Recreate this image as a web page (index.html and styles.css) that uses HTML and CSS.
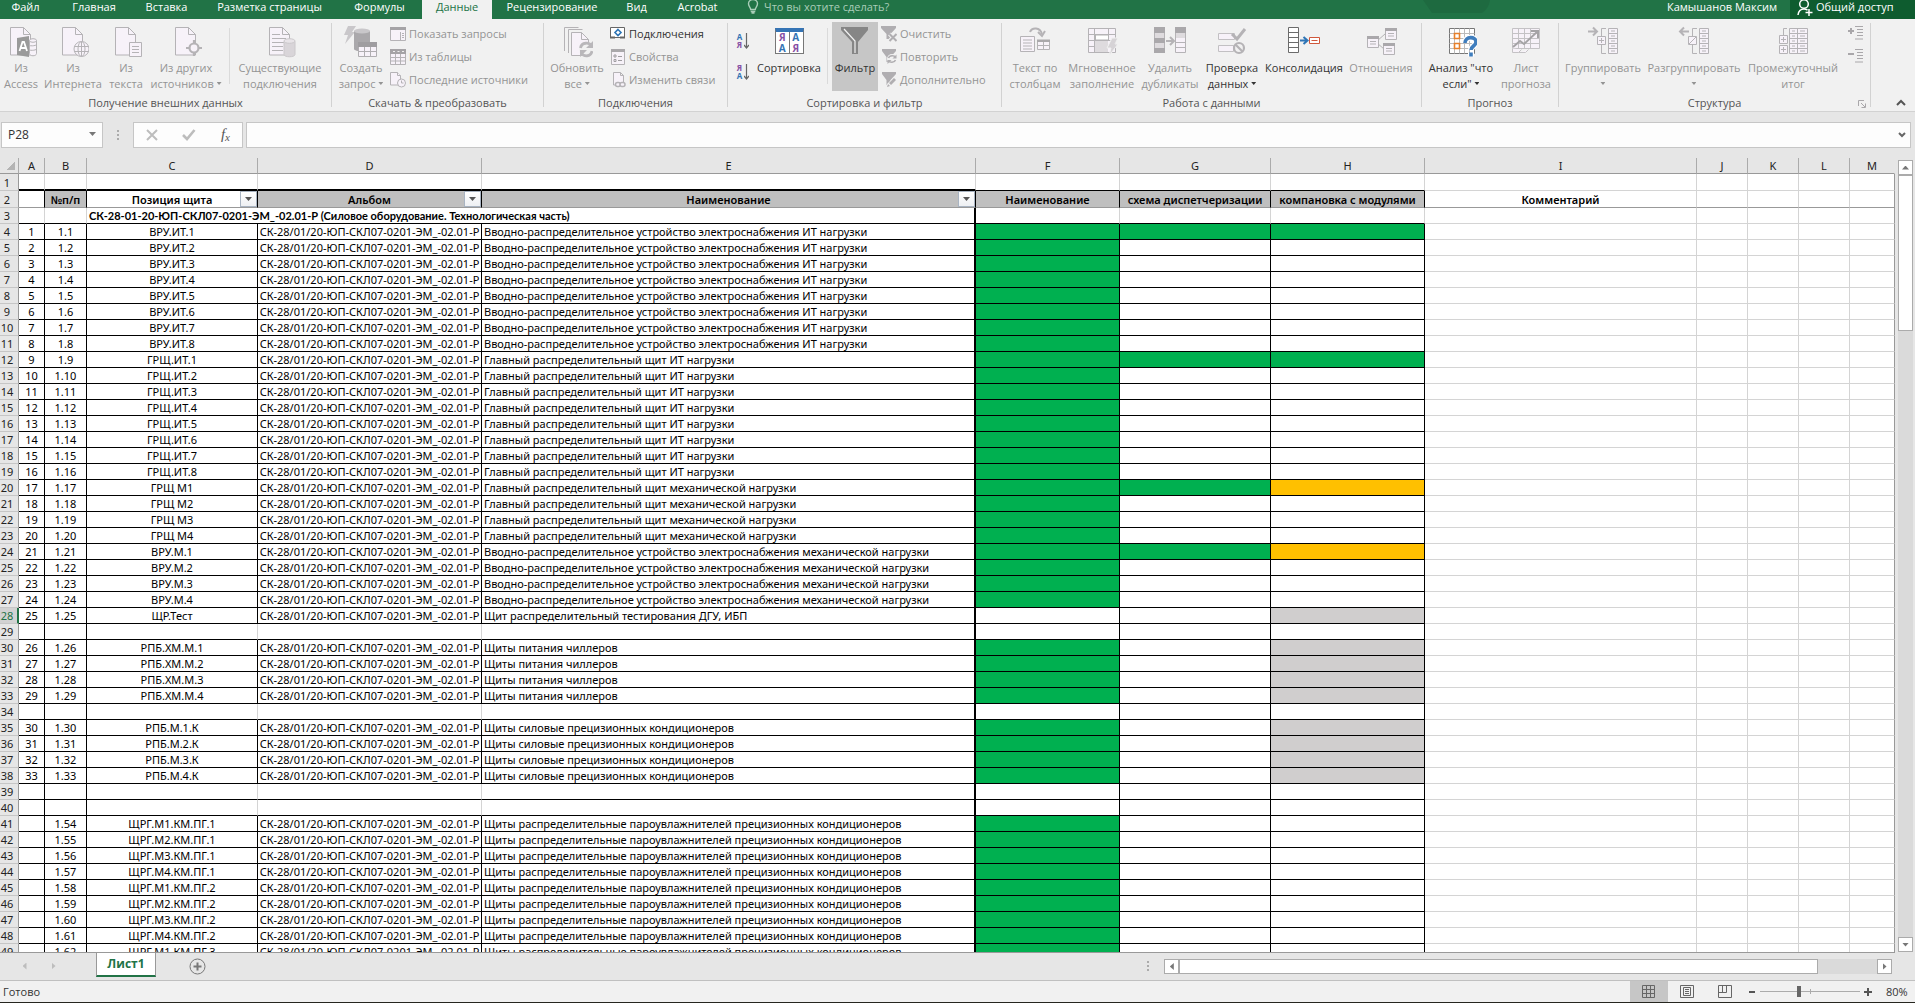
FILE: index.html
```html
<!DOCTYPE html>
<html lang="ru">
<head>
<meta charset="utf-8">
<title>Лист1</title>
<link rel="stylesheet" href="styles.css">
</head>
<body>
<header class="tabs">
  <nav class="tab-list">
    <button class="tab tab-file">Файл</button>
    <button class="tab">Главная</button>
    <button class="tab">Вставка</button>
    <button class="tab">Разметка страницы</button>
    <button class="tab">Формулы</button>
    <button class="tab active">Данные</button>
    <button class="tab">Рецензирование</button>
    <button class="tab">Вид</button>
    <button class="tab">Acrobat</button>
  </nav>
  <button class="tell-me">
    <svg width="12" height="16" viewBox="0 0 12 16" fill="none" stroke="#a9cdb8" stroke-width="1.4"><path d="M3.7 9.5C3.7 7.500 1.500 6.500 1.500 3.800 1.500 1.500 3.500-.5 6-.5s4.500 2 4.500 4.300c0 2.700-2.200 3.700-2.200 5.700zM3.700 11.500h4.600M4.500 13h3"/></svg>
    Что вы хотите сделать?
  </button>
  <svg class="deco" width="67" height="13" viewBox="0 0 67 13"><path d="M0 0h67c-1 6-3 9-8 13H9z" fill="#1e6a40"/></svg>
  <span class="user">Камышанов Максим</span>
  <button class="share">
    <svg width="16" height="17" viewBox="0 0 16 17" fill="none" stroke="#fff" stroke-width="1.500"><circle cx="7" cy="4" r="4.300"/><path d="M1 15c.5-4 2.500-6 6-6 1.500 0 2.500.5 3.500 1M12 9v7M8.500 12.500h7"/></svg>
    Общий доступ
  </button>
</header>

<section class="ribbon">
  <div class="group">
    <div class="tools">
      <button class="big w42" disabled>
        <svg width="32" height="32" viewBox="0 0 32 32" fill="#f7f2f9" stroke="#b5b3b6"><path d="M5.500 1.500h13l7 7v20.500h-20z"/><path d="M18.500 1.500v7h7" fill="none"/><path d="M24.500 14.500v13c0 3 7 3 7 0v-13" /><ellipse cx="28" cy="14.500" rx="3.500" ry="1.800"/><path d="M22 18.500c2 2 9 1.500 9.500 0M22 23c2 2 9 1.500 9.500 0" fill="none"/><path d="M12 12l12-2v21l-12-2z" fill="#9a9a9a" stroke="none"/><path d="M14.500 25l3-9h1.500l3 9M15.500 22h5.500" fill="none" stroke="#fff" stroke-width="1.800"/></svg>
        <span>Из<br>Access</span></button>
      <button class="big w62" disabled>
        <svg width="32" height="32" viewBox="0 0 32 32" fill="#f7f2f9" stroke="#b5b3b6"><path d="M5.500 1.500h13l7 7v20.500h-20z"/><path d="M18.500 1.500v7h7" fill="none"/><circle cx="24.500" cy="23" r="7.500"/><ellipse cx="24.500" cy="23" rx="3.500" ry="7.500"/><path d="M17.500 20.500h14M17.500 25.500h14M24.500 15.500v15" fill="none"/></svg>
        <span>Из<br>Интернета</span></button>
      <button class="big w44" disabled>
        <svg width="32" height="32" viewBox="0 0 32 32" fill="#f7f2f9" stroke="#b5b3b6"><path d="M5.500 1.500h13l7 7v20.500h-20z"/><path d="M18.500 1.500v7h7" fill="none"/><path d="M19.500 16.500h12v14h-12zM22 20.500h7M22 23.500h7M22 26.500h7"/></svg>
        <span>Из<br>текста</span></button>
      <button class="big w76" disabled>
        <svg width="32" height="32" viewBox="0 0 32 32" fill="#f7f2f9" stroke="#b5b3b6"><path d="M5.500 1.500h13l7 7v20.500h-20z"/><path d="M18.500 1.500v7h7" fill="none"/><circle cx="24" cy="22" r="4.500" stroke-width="2.200"/><path d="M24 14v4M24 26v4M16 22h4M28 22h4" stroke-width="2.200"/></svg>
        <span>Из других<br>источников <i class="caret"></i></span></button>
      <i class="rule"></i>
      <button class="big w100" disabled>
        <svg width="32" height="32" viewBox="0 0 32 32" fill="#f7f2f9" stroke="#b5b3b6"><path d="M5.500 1.500h13l7 7v20.500h-20z"/><path d="M18.500 1.500v7h7" fill="none"/><path d="M8 8.500h8M8 12.500h14M8 16.500h12M8 20.500h11M8 24.500h11"/><path d="M20 15.500v13c0 3 11 3 11 0v-13" fill="#d9d5d9" stroke="#cbc8cb"/><ellipse cx="25.500" cy="15" rx="5.500" ry="2.300" fill="#e8e4e8" stroke="#cbc8cb"/></svg>
        <span>Существующие<br>подключения</span></button>
    </div>
    <div class="caption">Получение внешних данных</div>
  </div>

  <div class="group">
    <div class="tools">
      <button class="big w58" disabled>
        <svg width="34" height="32" viewBox="0 0 34 32"><path d="M4 0h8l-4 6h3L1 18l3-9H0z" fill="#c9c7ca"/><path d="M10 5v18c0 3 16 3 16 0V5z" fill="#aaa8ab"/><ellipse cx="18" cy="5" rx="8" ry="2.600" fill="#c9c7ca"/><path d="M14.500 17.500h18v13h-18zM20.500 21v9.500M26.500 21v9.500M14.500 25.500h18" fill="#f7f2f9" stroke="#b0aeb1"/><path d="M14 16h19v5H14z" fill="#9f9da0"/></svg>
        <span>Создать<br>запрос <i class="caret"></i></span></button>
      <div class="stack">
        <button class="small" disabled><svg width="16" height="16" viewBox="0 0 16 16" fill="#f7f2f9" stroke="#b5b3b6"><path d="M.5 1.500h15v13H.5z"/><path d="M0 1h16v3H0z" fill="#a5a3a6" stroke="none"/><path d="M10.500 6v8M12 7.500h2M12 9.500h2M12 11.500h2"/></svg>Показать запросы</button>
        <button class="small" disabled><svg width="16" height="16" viewBox="0 0 16 16" fill="#f7f2f9" stroke="#b5b3b6"><path d="M.5 1.500h15v14H.5zM.5 8.500h15M.5 12h15M5.500 5v10M10.500 5v10"/><path d="M0 0h16v5H0z" fill="#a5a3a6" stroke="none"/><path d="M3 2.500h2M7.500 2.500h2M12 2.500h2" stroke="#eee"/></svg>Из таблицы</button>
        <button class="small" disabled><svg width="16" height="16" viewBox="0 0 16 16" fill="#f7f2f9" stroke="#b5b3b6"><path d="M.5 0.500h7l3 3v9.500h-10z"/><path d="M7.500.5v3h3"/><circle cx="11.500" cy="11" r="4"/><path d="M11.500 8.500v2.500h2"/></svg>Последние источники</button>
      </div>
    </div>
    <div class="caption">Скачать &amp; преобразовать</div>
  </div>

  <div class="group">
    <div class="tools">
      <button class="big w66" disabled>
        <svg width="32" height="32" viewBox="0 0 32 32" fill="#f7f2f9" stroke="#b5b3b6"><path d="M3.500 25V1.500h14M7.500 27V3.500h14" fill="none"/><path d="M10.500 6.500h10l7 7v16h-17z"/><path d="M20.500 6.500v7h7" fill="none"/><circle cx="25.500" cy="23.500" r="7.500" fill="#f1f1f1" stroke="none"/><path d="M19.500 22c1-6 9-6 11-2M31 25c-1 6-8 6-11 2" fill="none" stroke="#b9b7ba" stroke-width="2.800"/><path d="M32 15v7h-7zM19 31v-7h7z" fill="#b9b7ba" stroke="none"/></svg>
        <span>Обновить<br>все <i class="caret"></i></span></button>
      <div class="stack">
        <button class="small"><svg width="16" height="16" viewBox="0 0 16 16" fill="#fff" stroke="#666"><path d="M.5 1.500h14v10H.5z"/><path d="M0 11.500h5M10 11.500h5" stroke-width="2"/><path d="M8 3.500l3 3-3 3-3-3z" stroke="#2e75b6" stroke-width="1.600"/></svg>Подключения</button>
        <button class="small" disabled><svg width="16" height="16" viewBox="0 0 16 16" fill="#f7f2f9" stroke="#b5b3b6"><path d="M1.500.5h13v15h-13z"/><path d="M1 0h14v3H1z" fill="#aaa8ab" stroke="none"/><path d="M4 6h2v2H4zM4 10.500h2v2H4zM8 7.500h4M8 11.500h4" stroke="#9f9da0"/></svg>Свойства</button>
        <button class="small" disabled><svg width="16" height="16" viewBox="0 0 16 16" fill="#f7f2f9" stroke="#b5b3b6"><path d="M3.500 13V.5h7l3 3V10M10.500.5v3h3M3.500 13h2"/><rect x="5.500" y="10.500" width="5" height="4" rx="2" stroke-width="1.500"/><rect x="10" y="10.500" width="5" height="4" rx="2" stroke-width="1.500"/></svg>Изменить связи</button>
      </div>
    </div>
    <div class="caption">Подключения</div>
  </div>

  <div class="group">
    <div class="tools">
      <div class="sorts">
        <button class="icon-btn" aria-label="Сортировка от А до Я"><span class="az"><b class="blue">А</b><b class="violet">Я</b></span><svg width="5" height="16" viewBox="0 0 5 16" fill="none" stroke="#666"><path d="M2.500 0v15M0 12l2.500 3L5 12" stroke-width="1.200"/></svg></button>
        <button class="icon-btn" aria-label="Сортировка от Я до А"><span class="az"><b class="violet">Я</b><b class="blue">А</b></span><svg width="5" height="16" viewBox="0 0 5 16" fill="none" stroke="#666"><path d="M2.500 0v15M0 12l2.500 3L5 12" stroke-width="1.200"/></svg></button>
      </div>
      <button class="big w66">
        <span class="sort-pic"><b class="violet">Я</b><b class="blue">А</b><b class="blue">А</b><b class="violet">Я</b></span>
        <span>Сортировка</span></button>
      <i class="rule"></i>
      <button class="big w46 pressed">
        <svg width="32" height="32" viewBox="0 0 32 32"><path d="M2 1h27v3L19 16v12h-6V16L2 4z" fill="#868686"/><path d="M5 3l11 12v12" fill="none" stroke="#f2f2f2" stroke-width="1.200"/></svg>
        <span>Фильтр</span></button>
      <div class="stack after-pressed">
        <button class="small" disabled><svg width="16" height="16" viewBox="0 0 16 16"><path d="M0 0h15v2L9.500 8v5h-4V8L0 2z" fill="#b0aeb1"/><path d="M8.500 8l7 7M15.500 8l-7 7" stroke="#f1f1f1" stroke-width="4"/><path d="M8.500 8l7 7M15.500 8l-7 7" stroke="#b0aeb1" stroke-width="2"/></svg>Очистить</button>
        <button class="small" disabled><svg width="16" height="16" viewBox="0 0 16 16"><path d="M1 0h14v2L9.500 8v5h-4V8L1 2z" fill="#b0aeb1"/><circle cx="11" cy="10" r="5" fill="#f1f1f1"/><path d="M7.500 9c1-3 6-3 7-.5M14.500 11c-1 3-6 3-7 .5" fill="none" stroke="#b0aeb1" stroke-width="1.500"/><path d="M15.500 5.500v4h-4zM6.500 15v-4h4z" fill="#b0aeb1"/></svg>Повторить</button>
        <button class="small" disabled><svg width="16" height="16" viewBox="0 0 16 16"><path d="M1 0h14v2L9.500 8v5h-4V8L1 2z" fill="#b0aeb1"/><path d="M5 15l1-3 7-7 3 3-7 6z" fill="#f1f1f1"/><path d="M6 15l1-3 2 2zM8 11l5-5 2 2-5 5z" fill="#b0aeb1"/></svg>Дополнительно</button>
      </div>
    </div>
    <div class="caption">Сортировка и фильтр</div>
  </div>

  <div class="group">
    <div class="tools">
      <button class="big w66" disabled>
        <svg width="32" height="32" viewBox="0 0 32 32" fill="#f7f2f9" stroke="#b5b3b6"><path d="M1.500 10.500h14v15h-14zM4 14h9M4 17h9M4 20h9M4 23h9"/><path d="M18.500 14.500h12v9h-12zM18.500 19.500h12M24.500 16v7"/><path d="M18 13.500h13v2.500h-13z" fill="#aaa8ab" stroke="none"/><path d="M11 6c2-5 10-5 12 2" fill="none" stroke-width="2"/><path d="M19 6l4 4 3-5" fill="none" stroke-width="2"/></svg>
        <span>Текст по<br>столбцам</span></button>
      <button class="big w68" disabled>
        <svg width="32" height="32" viewBox="0 0 32 32" fill="#f7f2f9" stroke="#b5b3b6"><path d="M2.500 2.500h27v24h-27zM2.500 8.500h27M2.500 14.500h27M2.500 20.500h27M8.500 2.500v24M22.500 2.500v12"/><path d="M9.500 9h13v5h-13z" fill="#fff"/><path d="M9 15h13v11H9z" fill="#dedbde" stroke="none"/><path d="M26 12h6l-3 6h3l-9 12 2-8h-4z" fill="#d6d3d6" stroke="#f1f1f1"/></svg>
        <span>Мгновенное<br>заполнение</span></button>
      <button class="big w68" disabled>
        <svg width="32" height="32" viewBox="0 0 32 32" fill="#f7f2f9" stroke="#b5b3b6"><path d="M.5 1.500h10v25H.5zM21.500 1.500h10v25h-10zM21.500 11.500h10M21.500 16.500h10M21.500 21.500h10"/><path d="M0 1h11v6H0zM0 12h11v5H0zM0 22h11v5H0zM21 1h11v6H21z" fill="#aaa8ab" stroke="none"/><path d="M1 7h9v5H1zM1 17h9v5H1zM22 7h9v5h-9z" fill="#dedbde" stroke="none"/><path d="M12 15h7M16 11l4 4-4 4" fill="none" stroke-width="2"/></svg>
        <span>Удалить<br>дубликаты</span></button>
      <button class="big w56">
        <svg width="32" height="32" viewBox="0 0 32 32" fill="#f7f2f9" stroke="#c2c0c3"><path d="M2.500 7.500h16v6h-16zM2.500 19.500h15v6h-15z"/><path d="M16 8l5 5L29 3" fill="none" stroke="#b5b3b6" stroke-width="3"/><circle cx="23" cy="22" r="5" fill="#f1f1f1" stroke="#b5b3b6" stroke-width="2.200"/><path d="M19.500 18.500l7 7" stroke="#b5b3b6" stroke-width="2.200"/></svg>
        <span>Проверка<br>данных <i class="caret"></i></span></button>
      <button class="big w88">
        <svg width="32" height="32" viewBox="0 0 32 32" fill="#fff" stroke="#6b6b6b"><path d="M.5 1.500h10v25H.5zM.5 6.500h10M.5 11.500h10M.5 16.500h10M.5 21.500h10"/><path d="M21.500 11.500h10v6h-10zM23.500 14.500h6" stroke="#d0583c"/><path d="M12 14.500h6M15.500 11l4 3.500-4 3.500" fill="none" stroke="#2e75b6" stroke-width="2"/></svg>
        <span>Консолидация</span></button>
      <button class="big w66" disabled>
        <svg width="32" height="32" viewBox="0 0 32 32" fill="#f7f2f9" stroke="#b5b3b6"><path d="M12 15l8-7M12 17l7 6" fill="none"/><path d="M2.500 10.500h11v11h-11zM20.500 2.500h11v11h-11zM18.500 17.500h11v11h-11zM5 15.500h6M5 18h6M23 7.500h6M23 10h6M21 22.500h6M21 25h6"/><path d="M2 10h12v3H2zM20 2h12v3H20zM18 17h12v3H18z" fill="#aaa8ab" stroke="none"/></svg>
        <span>Отношения</span></button>
    </div>
    <div class="caption">Работа с данными</div>
  </div>

  <div class="group">
    <div class="tools">
      <button class="big w78">
        <svg width="32" height="32" viewBox="0 0 32 32" fill="#fff" stroke="#777"><path d="M4.500 2.500h25v25h-25z"/><path d="M4.500 7.500h25M4.500 12.500h25M4.500 17.500h25M4.500 22.500h25M9.500 2.500v25M14.500 2.500v25M19.500 2.500v25M24.500 2.500v25" stroke="#bbb"/><path d="M9.500 7.500h5v5h-5zM9.500 17.500h5v5h-5z" stroke="#e6802b" stroke-width="1.600"/><path d="M20 17c0-7 11-7 11-1 0 4-5 4-5 8M26 27v3.500" fill="none" stroke="#fff" stroke-width="6"/><path d="M20 17c0-7 11-7 11-1 0 4-5 4-5 8M26 26.500v4" fill="none" stroke="#3f7dbd" stroke-width="3.600"/></svg>
        <span>Анализ "что<br>если" <i class="caret"></i></span></button>
      <button class="big w52" disabled>
        <svg width="32" height="32" viewBox="0 0 32 32" fill="#f7f2f9" stroke="#c4c2c5"><path d="M2.500 2.500h27v20h-27zM2.500 7.500h27M2.500 12.500h27M2.500 17.500h27M8.500 2.500v20M14.500 2.500v20M20.500 2.500v20"/><path d="M2.500 22.500v4h6l3-3 M8.500 26.500h7l3-3"/><path d="M3 21l7-6 4 3L28 5M21 5h7v7" fill="none" stroke="#a5a3a6" stroke-width="2"/></svg>
        <span>Лист<br>прогноза</span></button>
    </div>
    <div class="caption">Прогноз</div>
  </div>

  <div class="group last">
    <div class="tools">
      <button class="big w88" disabled>
        <svg width="32" height="32" viewBox="0 0 32 32" fill="#f7f2f9" stroke="#b5b3b6"><path d="M21.500 2.500h9v25h-9zM21.500 7.500h9M21.500 12.500h9M21.500 17.500h9M21.500 22.500h9M24 5h4M24 10h4M24 15h4M24 20h4M24 25h4"/><path d="M19 2.500h-4.500v8M14.500 19v8.500H19" fill="none"/><path d="M10.500 10.500h8v8h-8zM12 14.500h5M14.500 12v5"/><path d="M1 5.500h8M6 1.500l4 4-4 4" fill="none" stroke-width="2"/></svg>
        <span>Группировать<br><i class="caret"></i></span></button>
      <button class="big w94" disabled>
        <svg width="32" height="32" viewBox="0 0 32 32" fill="#f7f2f9" stroke="#b5b3b6"><path d="M21.500 2.500h9v25h-9zM21.500 7.500h9M21.500 12.500h9M21.500 17.500h9M21.500 22.500h9M24 5h4M24 10h4M24 15h4M24 20h4M24 25h4"/><path d="M19 2.500h-4.500v8M14.500 19v8.500H19" fill="none"/><path d="M10.500 10.500h8v8h-8zM11 18l7-7"/><path d="M11 5.500H2M6 1.500l-4 4 4 4" fill="none" stroke-width="2"/></svg>
        <span>Разгруппировать<br><i class="caret"></i></span></button>
      <button class="big w104" disabled>
        <svg width="32" height="32" viewBox="0 0 32 32" fill="#f7f2f9" stroke="#b5b3b6"><path d="M12.500 2.500h18v25h-18zM12.500 7.500h18M12.500 12.500h18M12.500 17.500h18M12.500 22.500h18M20.500 2.500v25M15 5h3M15 10h3M15 15h3M15 20h3M15 25h3M23 5h5M23 10h5M23 15h5M23 20h5M23 25h5"/><path d="M10 2.500H6.500v8" fill="none"/><path d="M2.500 9.500h8v8h-8zM2.500 19.500h8v8h-8zM4 13.500h5M6.500 11v5M4 23.500h5M6.500 21v5"/></svg>
        <span>Промежуточный<br>итог</span></button>
      <div class="details">
        <button class="icon-btn" disabled aria-label="Отобразить детали"><svg width="16" height="14" viewBox="0 0 16 14" stroke="#a9a7aa" fill="none"><path d="M0 5h6M3 2v6" stroke-width="2"/><path d="M7 .5h8M9 3.500h6M9 6.500h6M9 9.500h6M7 13h8"/></svg></button>
        <button class="icon-btn" disabled aria-label="Скрыть детали"><svg width="16" height="14" viewBox="0 0 16 14" stroke="#a9a7aa" fill="none"><path d="M0 5h6" stroke-width="2"/><path d="M7 .5h8M9 3.500h6M9 6.500h6M9 9.500h6M7 13h8"/></svg></button>
      </div>
    </div>
    <div class="caption">Структура<svg class="launcher" width="8" height="8" viewBox="0 0 8 8" fill="none" stroke="#a9a7aa"><path d="M.5 6V.5H6M3 3l4 4M7.500 3.500v4h-4"/></svg></div>
  </div>
  <button class="collapse" aria-label="Свернуть ленту"><svg width="10" height="7" viewBox="0 0 10 7" fill="none" stroke="#555" stroke-width="2"><path d="M1 6l4-4 4 4"/></svg></button>
</section>

<section class="formula-bar">
  <div class="name-box"><input aria-label="Имя" value="P28"><button aria-label="Список имён"><i class="caret"></i></button></div>
  <i class="dots"></i>
  <div class="fx">
    <button aria-label="Отмена"><svg width="12" height="12" viewBox="0 0 12 12" stroke="#bdbdbd" stroke-width="2"><path d="M1 1l10 10M11 1L1 11"/></svg></button>
    <button aria-label="Ввод"><svg width="14" height="12" viewBox="0 0 14 12" fill="none" stroke="#bdbdbd" stroke-width="2.600"><path d="M1 6l4 4 7.500-9"/></svg></button>
    <button class="fx-label" aria-label="Вставить функцию"><i>f<sub>x</sub></i></button>
  </div>
  <div class="formula"><input aria-label="Строка формул"><button aria-label="Развернуть"><svg width="8" height="6" viewBox="0 0 8 6" fill="none" stroke="#666" stroke-width="2"><path d="M1 1l3 3 3-3"/></svg></button></div>
</section>

<main class="sheet">
  <div class="viewport">
    <table class="grid">
      <colgroup><col class="c-n"><col class="c-a"><col class="c-b"><col class="c-c"><col class="c-d"><col class="c-e"><col class="c-f"><col class="c-g"><col class="c-h"><col class="c-i"><col class="c-j"><col class="c-j"><col class="c-j"><col></colgroup>
      <thead><tr><th class="corner"></th><th>A</th><th>B</th><th>C</th><th>D</th><th>E</th><th>F</th><th>G</th><th>H</th><th>I</th><th>J</th><th>K</th><th>L</th><th>M</th></tr></thead>
      <tbody id="rows"></tbody>
    </table>
  </div>
  <div class="vscroll">
    <button class="sb-btn" aria-label="Вверх"><i class="tri up"></i></button>
    <div class="vtrack"><i class="vthumb"></i></div>
    <button class="sb-btn" aria-label="Вниз"><i class="tri down"></i></button>
  </div>
</main>

<footer>
  <div class="sheet-tabs">
    <button class="nav-btn" aria-label="Предыдущий лист"><i class="tri left"></i></button>
    <button class="nav-btn" aria-label="Следующий лист"><i class="tri right"></i></button>
    <button class="sheet-tab">Лист1</button>
    <button class="add" aria-label="Новый лист"><svg width="17" height="17" viewBox="0 0 17 17" fill="none" stroke="#777"><circle cx="8.500" cy="8.500" r="7.500"/><path d="M4.500 8.500h8M8.500 4.500v8" stroke-width="2"/></svg></button>
    <i class="dots"></i>
    <div class="hscroll">
      <button class="sb-btn" aria-label="Влево"><i class="tri left"></i></button>
      <div class="htrack"><i class="hthumb"></i></div>
      <button class="sb-btn" aria-label="Вправо"><i class="tri right"></i></button>
    </div>
  </div>
  <div class="status">
    <span class="ready">Готово</span>
    <button class="view on" aria-label="Обычный"><svg width="14" height="14" viewBox="0 0 14 14" fill="none" stroke="#666"><path d="M.5.5h12v12H.5zM4.500.5v12M8.500.5v12M.5 4.500h12M.5 8.500h12"/></svg></button>
    <button class="view" aria-label="Разметка страницы"><svg width="14" height="14" viewBox="0 0 14 14" fill="none" stroke="#666"><path d="M.5.5h13v12H.5zM3.500 2.500h7v8h-7zM5 4.500h4M5 6.500h4M5 8.500h4"/></svg></button>
    <button class="view" aria-label="Страничный режим"><svg width="14" height="14" viewBox="0 0 14 14" fill="none" stroke="#666"><path d="M.5.5h13v12H.5zM.5 7.500h8v-7M4.500.5v7"/></svg></button>
    <button class="zoom-btn zoom-out" aria-label="Уменьшить"><svg width="8" height="8" viewBox="0 0 8 8" stroke="#555" stroke-width="2"><path d="M1 4h6"/></svg></button>
    <input class="zoom" type="range" min="0" max="100" value="39" aria-label="Масштаб">
    <button class="zoom-btn" aria-label="Увеличить"><svg width="8" height="8" viewBox="0 0 8 8" stroke="#555" stroke-width="2"><path d="M0 4h8M4 0v8"/></svg></button>
    <span class="percent">80%</span>
  </div>
</footer>
<script src="app.js"></script>
</body>
</html>
```
FILE: app.js
```js
const ALBUM = 'СК-28/01/20-ЮП-СКЛ07-0201-ЭМ_-02.01-Р';
const KIND = {
  it: 'Вводно-распределительное устройство электроснабжения ИТ нагрузки',
  main: 'Главный распределительный щит ИТ нагрузки',
  mech: 'Главный распределительный щит механической нагрузки',
  input: 'Вводно-распределительное устройство электроснабжения механической нагрузки',
  test: 'Щит распределительный тестирования ДГУ, ИБП',
  chill: 'Щиты питания чиллеров',
  power: 'Щиты силовые прецизионных кондиционеров',
  steam: 'Щиты распределительные пароувлажнителей прецизионных кондиционеров'
};

// Fills of columns F, G, H: g = green, o = orange, s = silver, - = none
const rows = [];
let item = 1;
function add(position, kind, fills, numbered = true) {
  rows.push({ n: numbered ? item : '', p: '1.' + (numbered ? item : item + 20), position, kind, fills });
  item++;
}
for (let i = 1; i <= 8; i++) add('ВРУ.ИТ.' + i, 'it', i === 1 ? 'ggg' : 'g--');
for (let i = 1; i <= 8; i++) add('ГРЩ.ИТ.' + i, 'main', i === 1 ? 'ggg' : 'g--');
for (let i = 1; i <= 4; i++) add('ГРЩ М' + i, 'mech', i === 1 ? 'ggo' : 'g--');
for (let i = 1; i <= 4; i++) add('ВРУ.М.' + i, 'input', i === 1 ? 'ggo' : 'g--');
add('ЩР.Тест', 'test', '--s');
rows.push(null);
for (let i = 1; i <= 4; i++) add('РПБ.ХМ.М.' + i, 'chill', 'g-s');
rows.push(null);
for (let i = 1; i <= 4; i++) add('РПБ.М.' + i + '.К', 'power', 'g-s');
rows.push(null, null);
for (let i = 0; i < 9; i++) {
  add('ЩРГ.М' + (i % 4 + 1) + '.КМ.ПГ.' + (Math.floor(i / 4) + 1), 'steam', 'g--', false);
}

const FILL = { g: 'green', o: 'orange', s: 'silver', '-': '' };
const filter = '<button class="filter" aria-label="Фильтр"><i class="caret"></i></button>';
const tail = '<td></td>'.repeat(5);

let html = '<tr class="r1"><th>1</th>' + '<td class="top"></td>'.repeat(5) + '<td class="thin"></td>'.repeat(3) + tail + '</tr>';
html += '<tr class="r2"><th>2</th><td class="k"></td><td class="k head">№п/п</td>' +
  '<td class="k">Позиция щита' + filter + '</td><td class="k head">Альбом' + filter + '</td>' +
  '<td class="k head">Наименование' + filter + '</td><td class="k head">Наименование</td>' +
  '<td class="k head">схема диспетчеризации</td><td class="k head">компановка с модулями</td>' +
  '<td>Комментарий</td>' + '<td></td>'.repeat(4) + '</tr>';
html += '<tr><th>3</th><td class="under"></td><td class="under"></td>' +
  '<td class="under thick section" colspan="3">СК-28-01-20-ЮП-СКЛ07-0201-ЭМ_-02.01-Р (Силовое оборудование. Технологическая часть)</td>' +
  '<td class="under"></td><td class="under"></td><td class="under"></td>' + tail + '</tr>';

rows.forEach((r, i) => {
  const num = i + 4;
  const fills = r ? r.fills : '---';
  const inner = r ? 'under k' : 'under';
  html += `<tr><th${num === 28 ? ' class="current"' : ''}>${num}</th>` +
    `<td class="under k">${r ? r.n : ''}</td><td class="under k">${r ? r.p : ''}</td>` +
    `<td class="${inner}">${r ? r.position : ''}</td><td class="${inner}">${r ? ALBUM : ''}</td>` +
    `<td class="under thick name">${r ? KIND[r.kind] : ''}</td>` +
    [...fills].map(f => `<td class="under k ${FILL[f]}"></td>`).join('') + tail + '</tr>';
});
document.getElementById('rows').innerHTML = html;
```
FILE: styles.css
```css
* { box-sizing: border-box; }
body {
  margin: 0;
  height: 100vh;
  display: flex;
  flex-direction: column;
  overflow: hidden;
  background: #e6e6e6;
  color: #333;
  font: 11px/16px "Open Sans", "Noto Sans", sans-serif;
}
button, input {
  margin: 0;
  padding: 0;
  border: 0;
  background: none;
  color: inherit;
  font: inherit;
}
button { white-space: nowrap; }
svg { display: block; flex: none; }
i { display: inline-block; }

/* Tab strip */
.tabs {
  flex: none;
  display: flex;
  height: 19px;
  background: #217346;
  color: #fff;
  overflow: hidden;
}
.tab-list {
  display: grid;
  grid-template-columns: 57px 74px 71px 135px 85px 70px 120px 49px 73px;
}
.tab, .user, .share, .tell-me { line-height: 14px; padding-bottom: 5px; }
.tab-file { padding-right: 6px; }
.tab.active { background: #f1f1f1; color: #217346; }
.tell-me {
  display: flex;
  gap: 5px;
  margin-left: 13px;
  color: #a9cdb8;
}
.deco { margin-left: auto; }
.user { margin: 0 10px 0 174px; width: 116px; white-space: nowrap; text-align: center; }
.share {
  display: flex;
  gap: 3px;
  width: 125px;
  padding-left: 7px;
  background: #0e5c2f;
}

/* Ribbon */
.ribbon {
  flex: none;
  display: flex;
  height: 93px;
  background: #f1f1f1;
  border-bottom: 1px solid #d2d2d2;
}
.group {
  display: flex;
  flex-direction: column;
  padding-top: 3px;
  background: linear-gradient(#d2d2d2, #d2d2d2) right 4px / 1px 84px no-repeat;
  padding-right: 1px;
}
.group:nth-child(1) { width: 332px; }
.group:nth-child(2) { width: 212px; }
.group:nth-child(3) { width: 184px; }
.group:nth-child(4) { width: 274px; }
.group:nth-child(5) { width: 420px; }
.group:nth-child(6) { width: 137px; }
.group:nth-child(7) { width: 312px; }
.tools { display: flex; height: 73px; }
.caption {
  position: relative;
  text-align: center;
  color: #555;
}
.launcher { position: absolute; right: 4px; top: 5px; }
.big {
  flex: none;
  display: flex;
  flex-direction: column;
  align-items: center;
  gap: 2px;
  height: 69px;
  padding-top: 4px;
  line-height: 16px;
}
button:disabled { color: #949494; }
.w42 { width: 42px; } .w44 { width: 44px; } .w46 { width: 46px; }
.w52 { width: 52px; } .w56 { width: 56px; } .w58 { width: 58px; }
.w62 { width: 62px; } .w66 { width: 66px; } .w68 { width: 68px; }
.w76 { width: 76px; } .w78 { width: 78px; } .w88 { width: 88px; }
.w94 { width: 94px; } .w100 { width: 100px; } .w104 { width: 104px; }
.pressed { background: #c6c6c6; }
.rule { flex: none; width: 1px; height: 56px; margin: 6px 4px 0 5px; background: #dadada; }
.group:nth-child(1) .rule { margin-right: 0; }
.stack { display: flex; flex-direction: column; }
.after-pressed { margin-left: 3px; }
.small {
  display: flex;
  align-items: center;
  gap: 3px;
  height: 23px;
}
.caret {
  width: 5px;
  height: 3px;
  background: currentColor;
  clip-path: polygon(0 0, 100% 0, 50% 100%);
  vertical-align: 3px;
}
.sorts { width: 28px; padding: 11px 0 0 8px; display: flex; flex-direction: column; gap: 15px; }
.icon-btn { display: flex; gap: 1px; height: 16px; }
.az { display: grid; line-height: 8px; font-size: 8px; width: 7px; }
.blue { color: #3574b5; }
.violet { color: #8650a5; }
.sort-pic {
  display: grid;
  grid-template-columns: 1fr 1fr;
  width: 29px;
  height: 26px;
  margin: 2px 0 4px;
  border: 1px solid #777;
  border-top: 4px solid #3574b5;
  background: linear-gradient(#777, #777) center / 1px 100% no-repeat #fff;
  font-size: 10px;
  line-height: 10px;
  text-align: center;
}
.details { padding: 4px 0 0 3px; display: flex; flex-direction: column; gap: 7px; }
.collapse { margin: auto 9px 5px auto; }

/* Formula bar */
.formula-bar {
  flex: none;
  display: flex;
  height: 46px;
  padding: 10px 4px 10px 1px;
}
.name-box, .fx, .formula {
  display: flex;
  align-items: center;
  border: 1px solid #c6c6c6;
  background: #fdfdfd;
}
.name-box { width: 102px; padding: 0 6px; font-size: 12px; }
.name-box input { flex: 1; min-width: 0; }
.name-box .caret, .filter .caret { width: 7px; height: 4px; }
.name-box .caret { color: #777; }
.dots {
  width: 2px;
  height: 10px;
  margin: auto 14px;
  background: repeating-linear-gradient(#ababab 0 2px, transparent 2px 4px);
}
.fx { width: 110px; justify-content: space-between; padding: 0 12px; margin-right: 3px; }
.fx-label { font: 15px/16px "Liberation Serif", serif; color: #555; }
.fx sub { font-size: 11px; vertical-align: -2px; }
.formula { flex: 1; padding-right: 4px; }
.formula input { flex: 1; }

/* Grid */
.sheet { flex: 1; min-height: 0; display: flex; }
.viewport { flex: 1; min-width: 0; overflow: hidden; border-bottom: 1px solid #999; }
.grid {
  width: 100%;
  table-layout: fixed;
  border-spacing: 0;
  background: #fff;
  color: #000;
  font: 11px/15px "Noto Sans", sans-serif;
}
.c-n { width: 19px; } .c-a { width: 26px; } .c-b { width: 42px; }
.c-c { width: 171px; } .c-d { width: 224px; } .c-e { width: 494px; }
.c-f { width: 144px; } .c-g { width: 151px; } .c-h { width: 154px; }
.c-i { width: 272px; } .c-j { width: 51px; }
.grid td, .grid th {
  height: 16px;
  padding: 0;
  border: solid #d4d4d4;
  border-width: 0 1px 1px 0;
  overflow: hidden;
  white-space: nowrap;
  text-align: center;
}
.grid th { background: #e6e6e6; border-color: #ababab; color: #222; font-weight: 400; }
.grid thead th { border-bottom-color: #999; }
.grid thead th:last-child { border-right-color: transparent; }
.grid tbody th { padding-right: 4px; border-right-color: #999; border-bottom-color: #c6c6c6; }
.grid tbody td:last-child { border-right-color: #999; }
.grid .corner { background: linear-gradient(135deg, transparent 50%, #b4b4b4 50%) 7px 4px / 8px 8px no-repeat #e6e6e6; }
.grid th.current { background: #d2d2d2; color: #217346; border-right: 2px solid #217346; padding-right: 3px; }
.grid .r1 td, .grid .r1 th, .grid .r2 td, .grid .r2 th { height: 17px; }
.grid td.top { border-bottom: 2px solid #000; }
.grid td.thin, .grid td.under { border-bottom-color: #000; }
.grid td.k { border-right-color: #000; }
.grid td.thick { border-right: 2px solid #000; }
.grid .r2 td { position: relative; border-bottom-color: #999; font-weight: 600; }
.grid .r2 .head { background: #bfbfbf; }
.grid td.section { font: 700 11px/15px Lato, sans-serif; text-align: left; padding-left: 2px; }
.grid td.name { text-align: left; padding-left: 2px; }
.green { background: #00b050; }
.orange { background: #ffc000; }
.silver { background: #d0cece; }
.filter {
  position: absolute;
  right: 0;
  top: 0;
  display: flex;
  align-items: center;
  justify-content: center;
  width: 17px;
  height: 16px;
  border: 1px solid #a9b4c2;
  background: linear-gradient(#fff, #eef0f3);
  color: #555;
}

/* Scroll bars */
.vscroll { flex: none; display: flex; flex-direction: column; width: 20px; padding: 2px 2px 1px 3px; }
.sb-btn {
  flex: none;
  display: flex;
  align-items: center;
  justify-content: center;
  width: 15px;
  height: 15px;
  border: 1px solid #ababab;
  background: #fff;
  color: #777;
}
.vtrack { flex: 1; background: #dadada; }
.vthumb { display: block; height: 20.5%; border: 1px solid #ababab; background: #fff; }
.tri { width: 7px; height: 4px; background: currentColor; }
.up { clip-path: polygon(50% 0, 100% 100%, 0 100%); }
.down { clip-path: polygon(0 0, 100% 0, 50% 100%); }
.left, .right { width: 4px; height: 7px; }
.left { clip-path: polygon(100% 0, 100% 100%, 0 50%); }
.right { clip-path: polygon(0 0, 100% 50%, 0 100%); }

/* Sheet tabs and status */
.sheet-tabs { display: flex; height: 28px; border-bottom: 1px solid #c0c0c0; }
.nav-btn { width: 29px; padding-bottom: 2px; color: #bdbdbd; }
.nav-btn:first-child { margin-left: 10px; }
.sheet-tab {
  width: 60px;
  height: 24px;
  margin: 0 33px 0 28px;
  border: solid #999;
  border-width: 0 1px;
  border-bottom: 2px solid #217346;
  background: #fff;
  color: #217346;
  font-size: 12px;
  font-weight: 700;
}
.add { height: 26px; }
.sheet-tabs .dots { margin: 8px 15px 8px auto; }
.hscroll { display: flex; width: 38%; margin: 6px 23px 0 0; }
.htrack { flex: 1; height: 15px; background: #dadada; }
.hthumb { display: block; width: 91.5%; height: 15px; border: 1px solid #ababab; background: #fff; }
.status {
  display: flex;
  align-items: center;
  height: 22px;
  padding-left: 3px;
  background: #f1f1f1;
  border-bottom: 1px solid #26261f;
}
.ready { margin-right: auto; }
.view { display: flex; align-items: center; justify-content: center; width: 38px; height: 21px; }
.view.on { background: #c6c6c6; }
.zoom-btn { width: 8px; }
.zoom-out { margin-left: 4px; }
.zoom {
  appearance: none;
  width: 100px;
  height: 12px;
  margin: 0 4px;
  background:
    linear-gradient(#ababab, #ababab) 50% 50% / 1px 5px no-repeat,
    linear-gradient(#ababab, #ababab) 0 50% / 100% 1px no-repeat;
}
.zoom::-webkit-slider-thumb { appearance: none; width: 4px; height: 11px; background: #666; }
.percent { width: 43px; padding-left: 14px; }
```
